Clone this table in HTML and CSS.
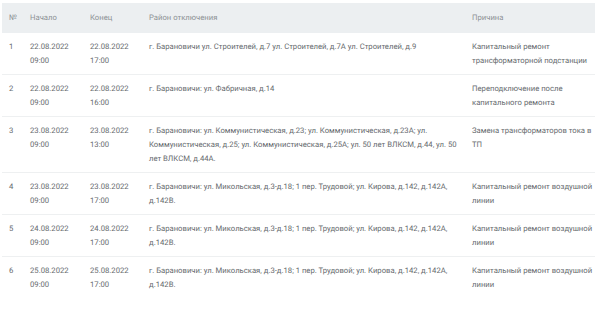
FILE: index.html
```html
<!DOCTYPE html>
<html lang="ru">
<head>
<meta charset="utf-8">
<link rel="stylesheet" href="styles.css">
</head>
<body>
<div class="wrap">
<table class="outages">
  <colgroup>
    <col class="c-num"><col class="c-start"><col class="c-end"><col class="c-area"><col class="c-reason">
  </colgroup>
  <thead>
    <tr><th>№</th><th>Начало</th><th>Конец</th><th>Район отключения</th><th>Причина</th></tr>
  </thead>
  <tbody>
    <tr><td>1</td><td>22.08.2022 09:00</td><td>22.08.2022 17:00</td><td>г. Барановичи ул. Строителей, д.7 ул. Строителей, д.7А ул. Строителей, д.9</td><td>Капитальный ремонт трансформаторной подстанции</td></tr>
    <tr><td>2</td><td>22.08.2022 09:00</td><td>22.08.2022 16:00</td><td>г. Барановичи: ул. Фабричная, д.14</td><td>Переподключение после капитального ремонта</td></tr>
    <tr><td>3</td><td>23.08.2022 09:00</td><td>23.08.2022 13:00</td><td>г. Барановичи: ул. Коммунистическая, д.23; ул. Коммунистическая, д.23А; ул. Коммунистическая, д.25; ул. Коммунистическая, д.25А; ул. 50 лет ВЛКСМ, д.44, ул. 50 лет ВЛКСМ, д.44А.</td><td>Замена трансформаторов тока в ТП</td></tr>
    <tr><td>4</td><td>23.08.2022 09:00</td><td>23.08.2022 17:00</td><td>г. Барановичи: ул. Микольская, д.3-д.18; 1 пер. Трудовой; ул. Кирова, д.142, д.142А, д.142В.</td><td>Капитальный ремонт воздушной линии</td></tr>
    <tr><td>5</td><td>24.08.2022 09:00</td><td>24.08.2022 17:00</td><td>г. Барановичи: ул. Микольская, д.3-д.18; 1 пер. Трудовой; ул. Кирова, д.142, д.142А, д.142В.</td><td>Капитальный ремонт воздушной линии</td></tr>
    <tr><td>6</td><td>25.08.2022 09:00</td><td>25.08.2022 17:00</td><td>г. Барановичи: ул. Микольская, д.3-д.18; 1 пер. Трудовой; ул. Кирова, д.142, д.142А, д.142В.</td><td>Капитальный ремонт воздушной линии</td></tr>
  </tbody>
</table>
</div>
</body>
</html>
```

FILE: styles.css
```css
html, body {
  margin: 0;
  padding: 0;
  background: #ffffff;
}
.wrap {
  padding: 3px 5px 0 2px;
}
.outages {
  width: 593px;
  table-layout: fixed;
  border-collapse: collapse;
  font-family: Roboto, "Liberation Sans", sans-serif;
  font-size: 7.7px;
  line-height: 14px;
  color: #666a6e;
  text-rendering: geometricPrecision;
}
.c-num { width: 21px; }
.c-start { width: 60px; }
.c-end { width: 59px; }
.c-area { width: 323px; }
.c-reason { width: 130px; }
.outages th {
  background: #eceff1;
  color: #8d9195;
  font-weight: 400;
  text-align: left;
  padding: 8px 0 8px 7px;
  vertical-align: middle;
}
.outages td {
  padding: 7px 0 6px 7px;
  vertical-align: top;
  border-bottom: 1px solid #eef0f1;
}
.outages tbody tr:last-child td {
  border-bottom: none;
}
```
